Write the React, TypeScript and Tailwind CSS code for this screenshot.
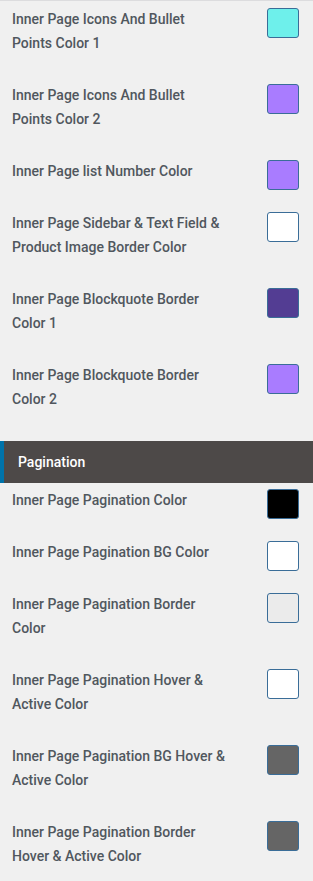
import React from "react";

type Item = { label: string; color: string };

const group1: Item[] = [
  { label: "Inner Page Icons And Bullet Points Color 1", color: "#6ef0eb" },
  { label: "Inner Page Icons And Bullet Points Color 2", color: "#a97cff" },
  { label: "Inner Page list Number Color", color: "#a97cff" },
  { label: "Inner Page Sidebar & Text Field & Product Image Border Color", color: "#ffffff" },
  { label: "Inner Page Blockquote Border Color 1", color: "#533d93" },
  { label: "Inner Page Blockquote Border Color 2", color: "#a97cff" },
];

const group2: Item[] = [
  { label: "Inner Page Pagination Color", color: "#000000" },
  { label: "Inner Page Pagination BG Color", color: "#ffffff" },
  { label: "Inner Page Pagination Border Color", color: "#ebebeb" },
  { label: "Inner Page Pagination Hover & Active Color", color: "#ffffff" },
  { label: "Inner Page Pagination BG Hover & Active Color", color: "#656565" },
  { label: "Inner Page Pagination Border Hover & Active Color", color: "#656565" },
];

function Row({ item }: { item: Item }) {
  return (
    <div className="flex items-start justify-between pl-3 pr-[14px] mb-7">
      <div className="w-[214px] text-[14px] leading-6 font-medium text-[#50575e]">
        {item.label}
      </div>
      <div className="h-6 shrink-0">
        <div
          className="mt-px w-8 h-[30px] rounded-[3px] border border-[#3a6d98]"
          style={{ backgroundColor: item.color }}
        />
      </div>
    </div>
  );
}

export default function App() {
  return (
    <div
      className="w-[313px] h-[881px] bg-[#f0f0f0] border-t border-[#dcdcde] overflow-hidden"
      style={{ fontFamily: "Roboto, 'Noto Sans', sans-serif" }}
    >
      <div className="pt-[6px]">
        {group1.map((it, i) => (
          <Row key={i} item={it} />
        ))}
      </div>
      <div className="mt-[30px] h-[42px] bg-[#4d4948] border-l-4 border-[#0073aa] flex items-center pl-[14px] text-[14px] font-medium text-white">
        Pagination
      </div>
      <div className="pt-[5px]">
        {group2.map((it, i) => (
          <Row key={i} item={it} />
        ))}
      </div>
    </div>
  );
}
